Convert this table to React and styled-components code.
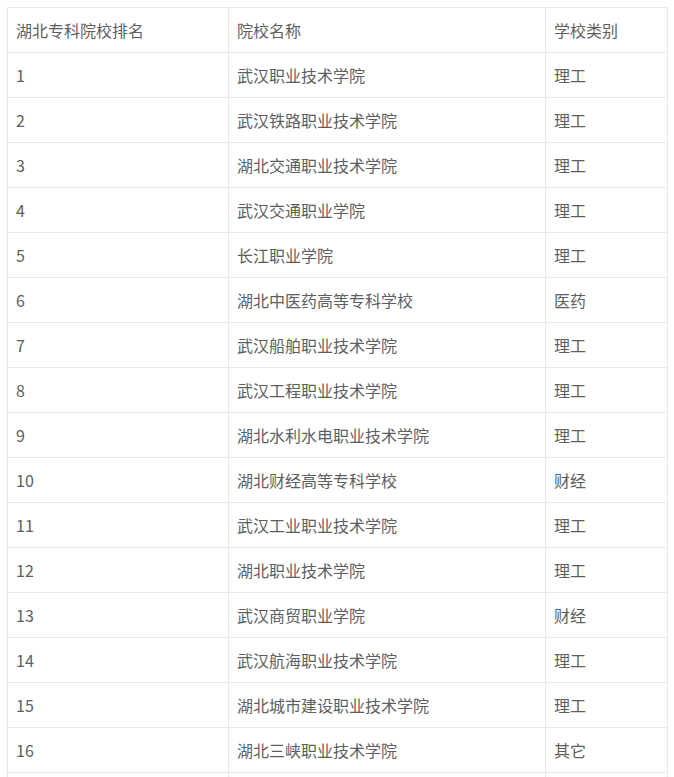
import React from 'react';
import styled, { createGlobalStyle } from 'styled-components';

const rows = [
    ['1', '武汉职业技术学院', '理工'],
    ['2', '武汉铁路职业技术学院', '理工'],
    ['3', '湖北交通职业技术学院', '理工'],
    ['4', '武汉交通职业学院', '理工'],
    ['5', '长江职业学院', '理工'],
    ['6', '湖北中医药高等专科学校', '医药'],
    ['7', '武汉船舶职业技术学院', '理工'],
    ['8', '武汉工程职业技术学院', '理工'],
    ['9', '湖北水利水电职业技术学院', '理工'],
    ['10', '湖北财经高等专科学校', '财经'],
    ['11', '武汉工业职业技术学院', '理工'],
    ['12', '湖北职业技术学院', '理工'],
    ['13', '武汉商贸职业学院', '财经'],
    ['14', '武汉航海职业技术学院', '理工'],
    ['15', '湖北城市建设职业技术学院', '理工'],
    ['16', '湖北三峡职业技术学院', '其它'],
    ['', '', ''],
];

const GlobalStyle = createGlobalStyle`
    body {
        margin: 0;
        background: #fff;
        font-family: "Noto Sans CJK SC", "Liberation Sans", sans-serif;
    }
`;

const Page = styled.div`
    padding: 7px 0 0 7px;
`;

const Table = styled.table`
    width: 660px;
    border-collapse: collapse;
    table-layout: fixed;
`;

const Cell = styled.td`
    height: 44px;
    padding: 0 0 0 8px;
    border: 1px solid #e8e8e8;
    color: #5e5e5e;
    font-size: 16px;
    line-height: 20px;
    vertical-align: middle;
    text-align: left;
    white-space: nowrap;
`;

export default function App() {
    return (
        <Page>
            <GlobalStyle />
            <Table>
                <colgroup>
                    <col style={{ width: 221 }} />
                    <col style={{ width: 317 }} />
                    <col style={{ width: 122 }} />
                </colgroup>
                <tbody>
                    <tr>
                        <Cell>湖北专科院校排名</Cell>
                        <Cell>院校名称</Cell>
                        <Cell>学校类别</Cell>
                    </tr>
                    {rows.map((r, i) => (
                        <tr key={i}>
                            <Cell>{r[0]}</Cell>
                            <Cell>{r[1]}</Cell>
                            <Cell>{r[2]}</Cell>
                        </tr>
                    ))}
                </tbody>
            </Table>
        </Page>
    );
}
